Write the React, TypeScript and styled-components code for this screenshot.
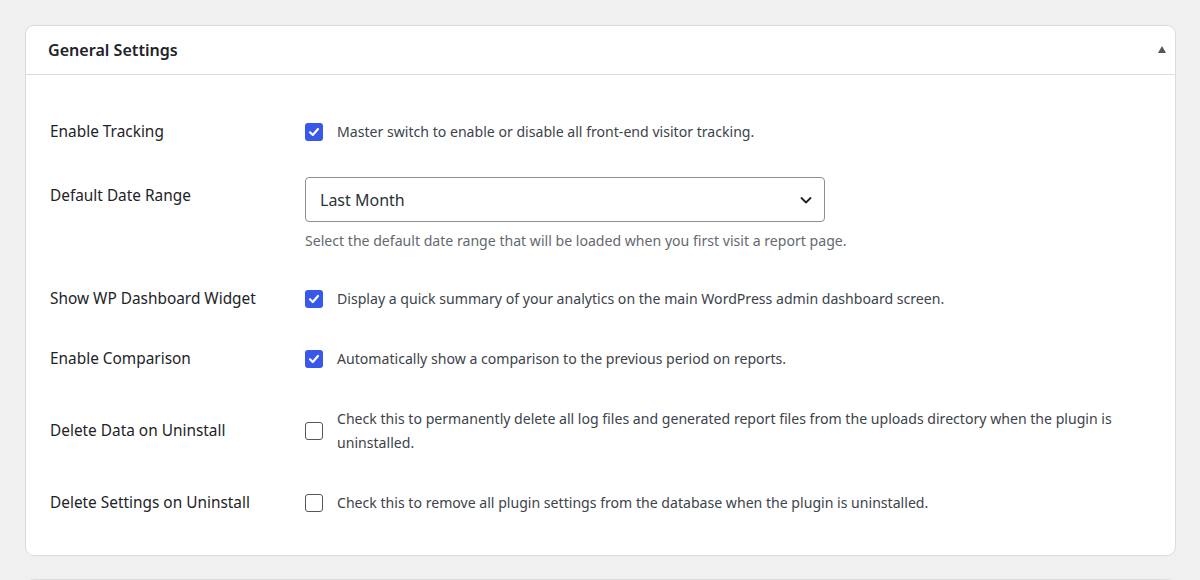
import * as React from 'react';
import styled, { createGlobalStyle } from 'styled-components';

const GlobalStyle = createGlobalStyle`
  html, body {
    margin: 0;
    padding: 0;
    overflow: hidden;
    background: #f0f0f1;
  }
  body {
    font-family: "Noto Sans", "Open Sans", sans-serif;
    color: #1d2327;
  }
`;

type Setting = {
  label: string;
  kind: 'check' | 'select';
  checked?: boolean;
  text: string;
};

const settings: Setting[] = [
  { label: 'Enable Tracking', kind: 'check', checked: true, text: 'Master switch to enable or disable all front-end visitor tracking.' },
  { label: 'Default Date Range', kind: 'select', text: 'Select the default date range that will be loaded when you first visit a report page.' },
  { label: 'Show WP Dashboard Widget', kind: 'check', checked: true, text: 'Display a quick summary of your analytics on the main WordPress admin dashboard screen.' },
  { label: 'Enable Comparison', kind: 'check', checked: true, text: 'Automatically show a comparison to the previous period on reports.' },
  { label: 'Delete Data on Uninstall', kind: 'check', checked: false, text: 'Check this to permanently delete all log files and generated report files from the uploads directory when the plugin is uninstalled.' },
  { label: 'Delete Settings on Uninstall', kind: 'check', checked: false, text: 'Check this to remove all plugin settings from the database when the plugin is uninstalled.' },
];

const CheckBox: React.FC<{ checked?: boolean }> = ({ checked }) => (
  <Box $checked={checked}>
    {checked && (
      <svg width="12" height="12" viewBox="0 0 12 12">
        <path d="M2 6.3 L4.8 9 L10 3" fill="none" stroke="#fff" strokeWidth="2.2" strokeLinecap="round" strokeLinejoin="round" />
      </svg>
    )}
  </Box>
);

const App: React.FC = () => {
  return (
    <Page>
      <GlobalStyle />
      <Card>
        <CardHeader>
          <h2>General Settings</h2>
          <Toggle aria-label="Collapse" />
        </CardHeader>
        <CardBody>
          {settings.map(s => (
            <Row key={s.label} $top={s.kind === 'select'}>
              <Label $top={s.kind === 'select'}>{s.label}</Label>
              {s.kind === 'check' ? (
                <CheckField>
                  <CheckBox checked={s.checked} />
                  <Description>{s.text}</Description>
                </CheckField>
              ) : (
                <div>
                  <Select>
                    <span>Last Month</span>
                    <svg width="14" height="14" viewBox="0 0 14 14">
                      <path d="M2.5 5 L7 9.5 L11.5 5" fill="none" stroke="#1d2327" strokeWidth="1.8" strokeLinecap="round" strokeLinejoin="round" />
                    </svg>
                  </Select>
                  <Hint>{s.text}</Hint>
                </div>
              )}
            </Row>
          ))}
        </CardBody>
      </Card>
      <Card />
    </Page>
  );
};

export default App;

const Page = styled.div`
  display: flex;
  flex-direction: column;
  gap: 23px;
  padding: 25px 24px 0 25px;
`;

const Card = styled.div`
  background: #fff;
  border: 1px solid #dcdcde;
  border-radius: 9px;
  min-height: 40px;
`;

const CardHeader = styled.div`
  display: flex;
  align-items: center;
  justify-content: space-between;
  height: 48px;
  padding: 0 9px 0 22px;
  border-bottom: 1px solid #dcdcde;

  h2 {
    margin: 0;
    font-size: 16.1px;
    font-weight: 600;
    color: #1d2327;
  }
`;

const Toggle = styled.span`
  width: 0;
  height: 0;
  border-left: 4.5px solid transparent;
  border-right: 4.5px solid transparent;
  border-bottom: 7px solid #50575e;
  margin-bottom: 1px;
`;

const CardBody = styled.div`
  padding: 27px 24px 22px 24px;
`;

const Row = styled.div<{ $top?: boolean }>`
  display: grid;
  grid-template-columns: 255px 1fr;
  align-items: ${p => (p.$top ? 'start' : 'center')};
  padding: 15px 0;
`;

const Label = styled.div<{ $top?: boolean }>`
  font-size: 15.4px;
  line-height: 24px;
  color: #1d2327;
  padding-top: ${p => (p.$top ? '7px' : '0')};
`;

const CheckField = styled.div`
  display: flex;
  align-items: center;
  gap: 14px;
  min-height: 30px;
  padding-right: 24px;
`;

const Box = styled.span<{ $checked?: boolean }>`
  flex: none;
  width: 18px;
  height: 18px;
  box-sizing: border-box;
  border-radius: 3px;
  display: flex;
  align-items: center;
  justify-content: center;
  background: ${p => (p.$checked ? '#3858e9' : '#fff')};
  border: ${p => (p.$checked ? 'none' : '1.5px solid #50575e')};
`;

const Description = styled.div`
  font-size: 14.1px;
  line-height: 24px;
  padding: 3px 0;
  color: #3c434a;
`;

const Select = styled.div`
  width: 520px;
  height: 45px;
  box-sizing: border-box;
  border: 1px solid #8c8f94;
  border-radius: 4px;
  display: flex;
  align-items: center;
  justify-content: space-between;
  padding: 0 11px 0 14px;
  font-size: 16px;
  color: #2c3338;
`;

const Hint = styled.div`
  margin-top: 7px;
  font-size: 14.1px;
  line-height: 24px;
  color: #646970;
  padding-bottom: 1px;
`;
